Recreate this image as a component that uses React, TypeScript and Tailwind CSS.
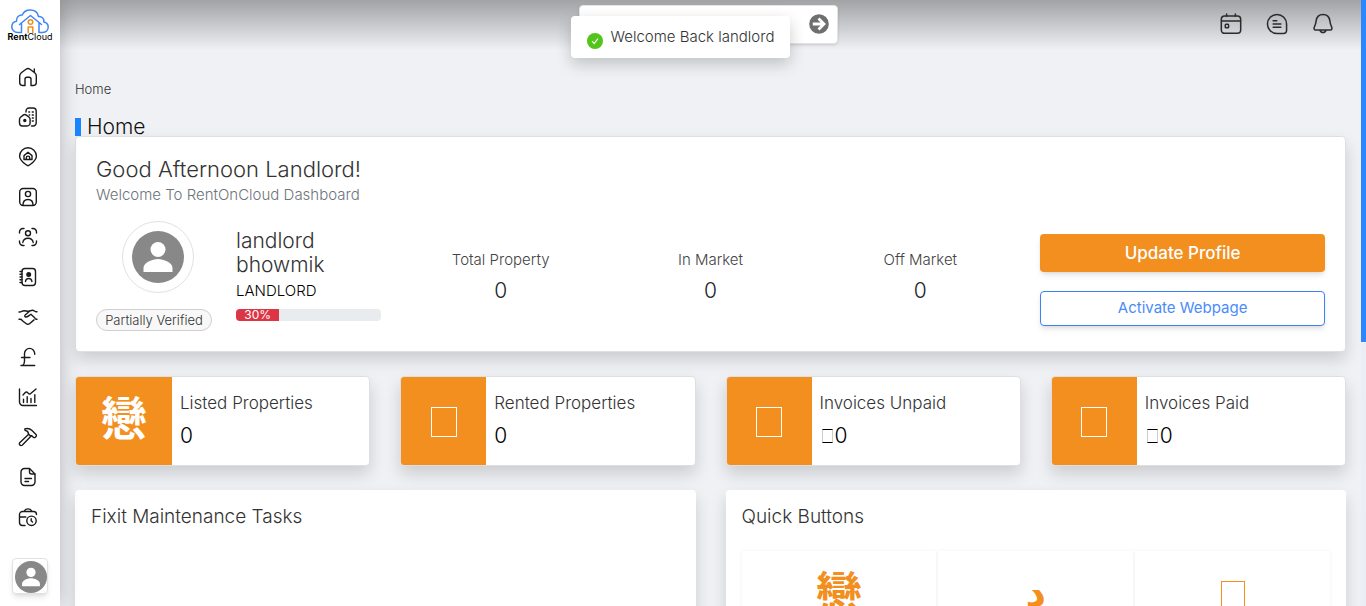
import type { ReactNode } from "react";

type IconProps = { children: ReactNode; className?: string };

function Icon({ children, className = "size-5" }: IconProps) {
  return (
    <svg
      viewBox="0 0 20 20"
      className={className}
      fill="none"
      stroke="currentColor"
      strokeWidth="1.4"
      strokeLinecap="round"
      strokeLinejoin="round"
      aria-hidden="true"
    >
      {children}
    </svg>
  );
}

const navItems: { label: string; icon: ReactNode }[] = [
  {
    label: "Home",
    icon: (
      <path d="M7 18.500H4.500A3 3 0 0 1 1.700 15.500V9a4 4 0 0 1 1.600-3.200L8 2.200a3.500 3.500 0 0 1 4 0l4.700 3.600A4 4 0 0 1 18.300 9v6.500a3 3 0 0 1-2.800 3H13v-6.200a2 2 0 0 0-2-2H9a2 2 0 0 0-2 2zM16.300 5.500V2" />
    ),
  },
  {
    label: "Properties",
    icon: (
      <>
        <path d="M8 5V4a3 3 0 0 1 3-3H15a3.200 3.200 0 0 1 3.200 3.200v11.600A3 3 0 0 1 15.200 19h-1.700" />
        <path d="M1.500 12.500a3 3 0 0 1 1-2.200l2.700-2.200a2.500 2.500 0 0 1 3.200 0l2.700 2.200a3 3 0 0 1 1 2.200V16a3 3 0 0 1-3 3H4.500a3 3 0 0 1-3-3z" />
        <path d="M10.800 5h.8M14.300 5h1M14.300 8h1M14.300 11h1M14.300 14h1M11.200 8h.5" />
        <circle cx="6.800" cy="13.500" r="1" fill="currentColor" />
      </>
    ),
  },
  {
    label: "Locations",
    icon: (
      <>
        <path d="M10 18.800c-1 0-1.500-.8-2.500-1.600C4.500 15 1.600 12.500 1.600 9.200a8.400 8.400 0 0 1 16.800 0c0 3.300-2.900 5.800-5.900 8-1 .8-1.500 1.600-2.500 1.600z" />
        <path d="M6 12.500V8.600l4-3.300 4 3.300v3.900z" />
        <path d="M8.300 12.300v-1.500a1.700 1.700 0 0 1 3.400 0v1.500" />
      </>
    ),
  },
  {
    label: "Tenants",
    icon: (
      <>
        <rect x="1.700" y="1.500" width="16.600" height="17" rx="3.500" />
        <circle cx="10" cy="7" r="2.600" />
        <path d="M5 18c0-3.500 2-5.500 5-5.500s5 2 5 5.500" />
      </>
    ),
  },
  {
    label: "Applicants",
    icon: (
      <>
        <path d="M1.500 6V5a3.500 3.500 0 0 1 3.500-3.500h1M14 1.500h1A3.500 3.500 0 0 1 18.500 5v1M18.500 14v1a3.500 3.500 0 0 1-3.500 3.500h-1M6 18.500H5A3.500 3.500 0 0 1 1.500 15v-1" />
        <circle cx="10" cy="6.200" r="2.500" />
        <path d="M4.800 15.500c.5-2.900 2.500-4.300 5.200-4.300s4.700 1.400 5.200 4.300" />
      </>
    ),
  },
  {
    label: "Contacts",
    icon: (
      <>
        <rect x="4" y="1.500" width="13.500" height="17" rx="3" />
        <path d="M2 4.500h2M2 7.300h2M2 10h2M2 12.700h2M2 15.500h2" />
        <circle cx="10.700" cy="7.500" r="1.800" fill="currentColor" />
        <path d="M7.500 14.500c.2-2 1.300-3 3.200-3s3 1 3.200 3" />
      </>
    ),
  },
  {
    label: "Agreements",
    icon: (
      <>
        <path d="M1 5h.7c1.800 0 2.300-1.300 4.300-1.300 1.700 0 2.500.6 4 .6s2.600-1.100 4.500-1.100c1.700 0 2.200 1.500 3.800 1.500h.7" />
        <path d="M11.500 4.300 7.200 8c-1 1-.3 2.300 1 2 2.300-.5 3.200-2 4.700-2.700l3.500 3.200c1 .9.900 1.800 1.900 1.800h.7M1 12.300h1c1.500 0 2 1 3 1.900l3 2.300c1.200 1 2.600 1 3.800 0l4.200-3.600" />
      </>
    ),
  },
  {
    label: "Payments",
    icon: (
      <path d="M16.700 7.200V6.500a5 5 0 0 0-10.200 0v8c0 2-1 3.300-2.300 4M3 18.500h13.700M3.500 10.500h8.500" />
    ),
  },
  {
    label: "Reports",
    icon: (
      <>
        <path d="M1.500 2v13a3.500 3.500 0 0 0 3.500 3.500h13.500" />
        <path d="M5 8l2.300-2.500a1.500 1.500 0 0 1 2.200 0l1 1a1.500 1.500 0 0 0 2.200 0L18 2M5.500 15.500v-3.300M9.200 15.500V9.700M13 15.500v-4M16.800 15.500V7.700" />
      </>
    ),
  },
  {
    label: "Maintenance",
    icon: (
      <>
        <path d="M6.800 1.800c2.900-.8 5.200-.3 7.200 1.700l4 4a1.400 1.400 0 0 1 0 2l-.7.700a1.400 1.400 0 0 1-2 0l-1.500-1.500-1.600.1-1.800-1.800c.1-2-1.100-3.200-3.300-3.600z" />
        <path d="m10.700 7.300-8.800 8.200a1.700 1.700 0 0 0 2.500 2.600l8.500-8.800" />
      </>
    ),
  },
  {
    label: "Documents",
    icon: (
      <>
        <path d="M6.500 1.500h5L17 7v8a3.500 3.500 0 0 1-3.500 3.500h-7A3.500 3.500 0 0 1 3 15V5a3.500 3.500 0 0 1 3.500-3.500z" />
        <path d="M11.500 1.700V5a2 2 0 0 0 2 2h3.300M7 11.500h6.500M7 14.500h3.500" />
      </>
    ),
  },
  {
    label: "Jobs",
    icon: (
      <>
        <path d="M7 18.500H4.500a3 3 0 0 1-3-3v-8a3 3 0 0 1 3-3h11a3 3 0 0 1 3 3M6 4.300a4.500 4.500 0 0 1 8 0M1.800 10h6" />
        <circle cx="13.500" cy="13.800" r="4.700" />
        <path d="M13.200 11.800v2l1.300 1.200" />
      </>
    ),
  },
];

function Person({ className }: { className: string }) {
  return (
    <svg viewBox="0 0 52 52" className={className} aria-hidden="true">
      <circle cx="26" cy="26" r="26" fill="#888" />
      <circle cx="26" cy="18.500" r="7.500" fill="#fff" />
      <path d="M11.500 41v-4c0-5.500 9-9 14.500-9s14.500 3.500 14.500 9v4z" fill="#fff" />
    </svg>
  );
}

function Sidebar() {
  return (
    <aside className="z-20 flex w-[60px] shrink-0 flex-col justify-between bg-white shadow-[0_0_20px_rgba(0,0,0,0.25)]">
      <div>
        <a href="#" className="flex h-[57px] flex-col items-center pt-[9px]">
          <svg viewBox="0 0 38 25" className="h-[25px] w-[38px]" fill="none" strokeLinecap="round" strokeLinejoin="round" aria-hidden="true">
            <path
              d="M9.500 23.500H7C3 23.500.8 20.700.8 17.800c0-3 2.200-5 4.700-5.500-.3-4 2.500-6.600 5.800-6.300C12.700 2.700 15.600 1 19 1c4.600 0 7.800 2.700 8.500 6.500 3.600-.3 5.800 2.500 5.300 5.600 2.700.5 4.400 2.500 4.400 5 0 3-2.200 5.400-5.500 5.400H28V14.500M10.500 23.500v-9M8.500 15.500 19.500 6.500 30.500 15.500"
              stroke="#3c86f5"
              strokeWidth="1.500"
            />
            <circle cx="19.500" cy="13" r="2.300" stroke="#f28f1f" strokeWidth="1.500" />
            <path d="M17.200 23.500v-5.500h4.600v5.500" stroke="#f28f1f" strokeWidth="1.500" />
          </svg>
          <span className="-mt-1 text-[9px] leading-[14px] text-black">
            <b>Rent</b>Cloud
          </span>
        </a>
        <nav>
          {navItems.map((item) => (
            <a
              key={item.label}
              href="#"
              aria-label={item.label}
              className="flex h-10 items-center justify-center pr-1 text-[#1a1a1a]"
            >
              <Icon>{item.icon}</Icon>
            </a>
          ))}
        </nav>
      </div>
      <button
        type="button"
        aria-label="Account"
        className="mb-3 ml-3 flex size-9 items-end justify-end rounded border border-[#dee2e6] bg-white shadow-md"
      >
        <Person className="size-8" />
      </button>
    </aside>
  );
}

function Header() {
  return (
    <header className="absolute inset-x-0 top-0 z-10 grid h-[50px] grid-cols-[1fr_259px_1fr] items-center bg-linear-to-b from-[#a2a3a5] to-[#eff1f5] pr-1 pb-0.5">
      <form className="col-start-2 flex h-[39px] items-center rounded border border-[#e3e3e3] bg-white pr-2 shadow-sm">
        <input type="search" aria-label="Search" className="h-full min-w-0 flex-1 bg-transparent px-3 text-sm outline-none" />
        <button type="button" aria-label="Go" className="shrink-0">
          <svg viewBox="0 0 20 20" className="size-5" aria-hidden="true">
            <circle cx="10" cy="10" r="9.800" fill="#6f6f6f" />
            <path d="M3.800 10h10.500M9.500 4.500l5.500 5.500-5.500 5.500" fill="none" stroke="#fff" strokeWidth="2.800" />
          </svg>
        </button>
      </form>
      <div className="flex items-center justify-end gap-6 pr-[23px] text-[#2b2b2b]">
        <button type="button" aria-label="Calendar">
          <Icon className="size-[22px]">
            <rect x="1.200" y="2.800" width="17.600" height="15.700" rx="3" />
            <path d="M6 1v2M14 1v2M1.500 7.200h17" />
            <rect x="4.800" y="10.300" width="3" height="3.200" rx="0.800" />
          </Icon>
        </button>
        <button type="button" aria-label="Messages">
          <Icon className="size-[22px]">
            <path d="M10 1.300a8.700 8.700 0 0 1 8.700 8.700v5.700a3 3 0 0 1-3 3H10A8.700 8.700 0 0 1 10 1.300zM6.500 7h3.300M6.500 10h7M6.500 13h7" />
          </Icon>
        </button>
        <button type="button" aria-label="Notifications">
          <Icon className="size-[22px]">
            <path d="M10 1.300c-3.500 0-5.800 2.500-6.200 5.700-.3 2.300-.5 3.500-1.500 5.300-1 1.800-.4 3.200 1.200 3.200h13c1.600 0 2.200-1.400 1.200-3.200-1-1.800-1.200-3-1.500-5.300C15.800 3.800 13.500 1.300 10 1.300zM7.300 15.700a2.800 2.800 0 0 0 5.400 0" />
          </Icon>
        </button>
      </div>
    </header>
  );
}

const stats = [
  { label: "Total Property", value: 0 },
  { label: "In Market", value: 0 },
  { label: "Off Market", value: 0 },
];

function ProfileCard() {
  return (
    <section className="rounded border border-[#dedfe1] bg-white p-5 shadow-[0_8px_16px_rgba(0,0,0,0.15)]">
      <h2 className="text-[22px] leading-6 font-light text-[#333]">Good Afternoon Landlord!</h2>
      <p className="mt-1 text-[15px] leading-5 font-light text-[#6c757d]">Welcome To RentOnCloud Dashboard</p>
      <div className="-mx-[15px] mt-4 grid grid-cols-[1fr_2fr_1fr]">
        <div className="flex gap-6 px-[15px]">
          <div className="flex w-29 shrink-0 flex-col items-center gap-4">
            <div className="ml-2 flex size-18 items-center justify-center rounded-full border border-[#dee2e6]">
              <Person className="size-[52px]" />
            </div>
            <span className="w-full rounded-full border border-[#cfcfcf] bg-[#f8f8f8] text-center text-[13px] leading-5 font-light whitespace-nowrap text-[#333]">
              Partially Verified
            </span>
          </div>
          <div className="min-w-0 flex-1 pt-2">
            <h3 className="w-min text-[21px] leading-6 font-light text-[#333]">landlord bhowmik</h3>
            <p className="mt-1 text-[15px] leading-5 font-light text-black">LANDLORD</p>
            <div className="mt-2 flex h-3 items-center rounded bg-[#e9ecef]">
              <div className="w-[30%] rounded-l bg-[#dc3545] text-center text-xs leading-3 text-white">30%</div>
            </div>
          </div>
        </div>
        <dl className="grid grid-cols-3 pt-[27px] text-center">
          {stats.map((s) => (
            <div key={s.label}>
              <dt className="text-[15px] leading-6 font-light text-[#444]">{s.label}</dt>
              <dd className="mt-[7px] text-[21px] leading-6 font-light text-[#212529]">{s.value}</dd>
            </div>
          ))}
        </dl>
        <div className="flex flex-col gap-[19px] px-[15px] pt-[13px]">
          <button type="button" className="h-[38px] rounded bg-[#f28f1f] pt-0.5 text-[17px] font-medium text-white shadow-md">
            Update Profile
          </button>
          <button type="button" className="h-[35px] rounded border border-[#3c82f6] bg-white text-[15px] text-[#4a8bfa] shadow-md">
            Activate Webpage
          </button>
        </div>
      </div>
    </section>
  );
}

const summaries = [
  { label: "Listed Properties", glyph: true, currency: false },
  { label: "Rented Properties", glyph: false, currency: false },
  { label: "Invoices Unpaid", glyph: false, currency: true },
  { label: "Invoices Paid", glyph: false, currency: true },
];

function SummaryCards() {
  return (
    <section className="mt-6 grid grid-cols-4 gap-[30px]">
      {summaries.map((s) => (
        <article
          key={s.label}
          className="flex h-[90px] overflow-hidden rounded border border-[#dedfe1] bg-white shadow-[0_8px_16px_rgba(0,0,0,0.15)]"
        >
          {s.glyph ? (
            <div className="flex w-24 shrink-0 items-center justify-center bg-[#f28f1f] pb-3 font-['Noto_Sans_CJK_JP',sans-serif] text-[46px] leading-none font-bold text-white">
              戀
            </div>
          ) : (
            <div className="flex w-[85px] shrink-0 items-center justify-center bg-[#f28f1f] pt-0.5">
              <span className="h-[30px] w-[26px] border border-white" />
            </div>
          )}
          <div className="px-2 pt-3.5">
            <h3 className="text-[17px] leading-6 font-light whitespace-nowrap text-[#333]">{s.label}</h3>
            <p className="mt-[9px] flex items-center gap-0.5 text-[21px] leading-6 font-light text-black">
              {s.currency && <span className="ml-0.5 h-3.5 w-[11px] border border-x-[#ccc] border-y-black" />}0
            </p>
          </div>
        </article>
      ))}
    </section>
  );
}

function Panels() {
  return (
    <section className="mt-6 grid grid-cols-2 gap-[30px]">
      <article className="min-h-80 rounded bg-white px-4 pt-[15px] shadow-[0_8px_16px_rgba(0,0,0,0.15)]">
        <h2 className="text-[19px] leading-6 font-light text-[#333]">Fixit Maintenance Tasks</h2>
      </article>
      <article className="min-h-80 rounded bg-white px-4 pt-[15px] shadow-[0_8px_16px_rgba(0,0,0,0.15)]">
        <h2 className="text-[19px] leading-6 font-light text-[#333]">Quick Buttons</h2>
        <div className="mt-[22px] grid grid-cols-3 gap-0.5 text-[#f28f1f]">
          <button type="button" aria-label="Add property" className="flex h-32 justify-center pt-4 font-['Noto_Sans_CJK_JP',sans-serif] text-[46px] leading-none font-bold shadow-[0_0_4px_rgba(0,0,0,0.05)]">
            戀
          </button>
          <button type="button" aria-label="Add tenant" className="flex h-32 justify-center pt-[22px] font-['DejaVu_Sans',sans-serif] text-[40px] leading-none font-bold shadow-[0_0_4px_rgba(0,0,0,0.05)]">
            د
          </button>
          <button type="button" aria-label="Add invoice" className="flex h-32 justify-center pt-[30px] shadow-[0_0_4px_rgba(0,0,0,0.05)]">
            <span className="h-[30px] w-6 border border-current" />
          </button>
        </div>
      </article>
    </section>
  );
}

function Toast() {
  return (
    <div className="pointer-events-none absolute top-4 right-[5px] left-0 z-30 flex justify-center">
      <div
        role="status"
        className="flex h-[42px] items-center gap-2 rounded-sm bg-white px-4 whitespace-nowrap shadow-[0_6px_16px_rgba(0,0,0,0.2)]"
      >
        <svg viewBox="0 0 16 16" className="mt-2 size-4" aria-hidden="true">
          <circle cx="8" cy="8" r="8" fill="#52c41a" />
          <path d="m5 8.200 2.200 2.300 3.800-5" fill="none" stroke="#fff" strokeWidth="1.200" />
        </svg>
        <span className="text-[15px] leading-5 font-light text-[#333]">Welcome Back landlord</span>
      </div>
    </div>
  );
}

export default function App() {
  return (
    <div className="relative flex h-screen overflow-hidden bg-[#eff1f5] font-[Inter,sans-serif]">
      <Sidebar />
      <div className="relative min-w-0 flex-1 overflow-hidden">
        <Header />
        <main className="px-[15px] pt-20">
          <a href="#" className="block text-[13px] leading-[18px] font-light text-[#333]">
            Home
          </a>
          <h1 className="mt-5 flex h-[18px] items-center gap-1.5 text-[21px] font-light text-[#111]">
            <span className="h-[18px] w-1.5 bg-[#1a86ff]" />
            Home
          </h1>
          <ProfileCard />
          <SummaryCards />
          <Panels />
        </main>
      </div>
      <div className="w-[5px] shrink-0 bg-[#ebeef5]">
        <div className="h-[56.4%] bg-[#2e86ff]" />
      </div>
      <Toast />
    </div>
  );
}
